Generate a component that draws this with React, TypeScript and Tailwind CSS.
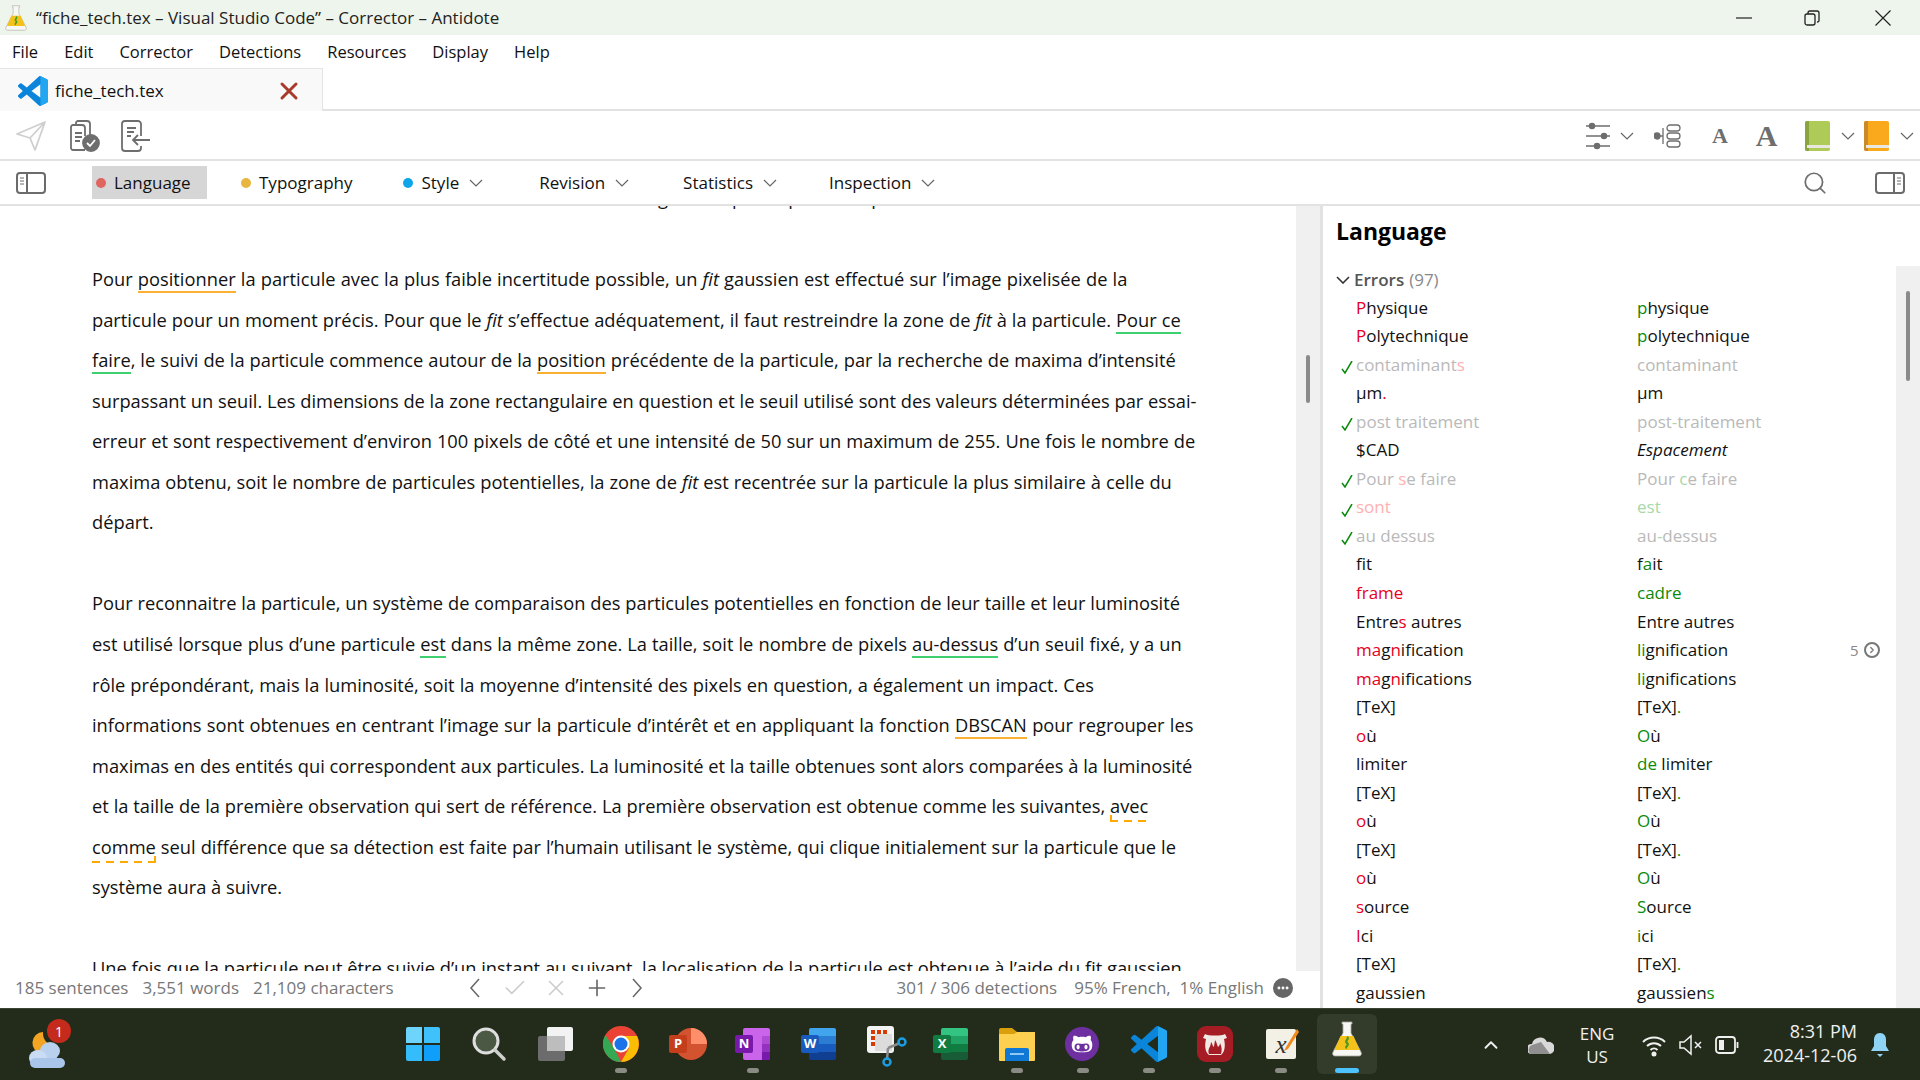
import React from "react";
import { ChevronRight, ChevronUp, Check, X, Plus, Search, Ellipsis } from "lucide-react";
import { FaGithubAlt } from "react-icons/fa";

const Flask = ({ size = 36 }: { size?: number }) => (
  <svg width={size} height={size} viewBox="0 0 36 36">
    <path d="M13 1h10v2h-1v9l10 19c1 2 0 4-2 4H6c-2 0-3-2-2-4l10-19V3h-1z" fill="#f7f7f3" stroke="#a8a89e" strokeWidth="0.8" />
    <path d="M11.500 15h13l6 14H5.500z" fill="#f3c21b" />
    <path d="M18 16c3 2-3 4 0 6s-3 4 0 5" stroke="#4a9a22" strokeWidth="2.200" fill="none" />
  </svg>
);

const VsCode = ({ size = 36 }: { size?: number }) => (
  <svg width={size} height={size} viewBox="0 0 24 24">
    <path
      fill="#0a85d9"
      d="M23.15 2.587L18.21.21a1.494 1.494 0 0 0-1.705.29l-9.46 8.63-4.12-3.128a.999.999 0 0 0-1.276.057L.327 7.261A1 1 0 0 0 .326 8.74L3.899 12 .326 15.26a1 1 0 0 0 .001 1.479L1.65 17.94a.999.999 0 0 0 1.276.057l4.12-3.128 9.46 8.63a1.492 1.492 0 0 0 1.704.29l4.942-2.377A1.5 1.5 0 0 0 24 20.06V3.939a1.5 1.5 0 0 0-.85-1.352zm-5.146 14.861L10.826 12l7.178-5.448v10.896z"
    />
    <path fill="#23a6f2" d="M18 0.2l5.150 2.387A1.5 1.5 0 0 1 24 3.939V20.060a1.500 1.500 0 0 1-.85 1.350L18 23.800z" />
  </svg>
);

const WinLogo = () => (
  <svg width="36" height="36" viewBox="0 0 36 36">
    <path d="M1 3a2 2 0 0 1 2-2h14v16H1z" fill="#6fd4fb" />
    <path d="M19 1h14a2 2 0 0 1 2 2v14H19z" fill="#3fc1fb" />
    <path d="M1 19h16v16H3a2 2 0 0 1-2-2z" fill="#35bcfb" />
    <path d="M19 19h16v14a2 2 0 0 1-2 2H19z" fill="#0f9ffa" />
  </svg>
);

const SearchBar = () => (
  <svg width="36" height="36" viewBox="0 0 36 36">
    <circle cx="15" cy="15" r="12" fill="#4b5843" stroke="#dedede" strokeWidth="3" />
    <path d="M24 24l9 9" stroke="#cfcfcf" strokeWidth="3.500" strokeLinecap="round" />
  </svg>
);

const TaskView = () => (
  <svg width="36" height="36" viewBox="0 0 36 36">
    <rect x="10" y="1" width="26" height="24" rx="2" fill="#f2f2f2" />
    <rect x="1" y="10" width="27" height="25" rx="2" fill="#6c6c6c" />
    <rect x="10" y="10" width="18" height="15" fill="#bdbdbd" />
  </svg>
);

const Chrome = () => (
  <svg width="36" height="36" viewBox="0 0 36 36">
    <circle cx="18" cy="18" r="18" fill="#ea4335" />
    <path d="M2.400 9L11 22l7 14A18 18 0 0 1 2.400 9z" fill="#34a853" />
    <path d="M18 36l8-14-8-12h16a18 18 0 0 1-16 26z" fill="#fbbc04" />
    <circle cx="18" cy="18" r="8.500" fill="#fff" />
    <circle cx="18" cy="18" r="6.500" fill="#1a73e8" />
  </svg>
);

const OfficeTile = ({ letter, bg }: { letter: string; bg: string }) => (
  <div className={`w-[18px] h-[18px] rounded-[2px] flex items-center justify-center text-[13px] font-bold text-white ${bg}`}>
    {letter}
  </div>
);

const PowerPoint = () => (
  <div className="relative w-[36px] h-[36px]">
    <div className="absolute left-[6px] top-[2px] w-[32px] h-[32px] rounded-full bg-[#d35230]" />
    <div className="absolute left-[22px] top-[2px] w-[16px] h-[16px] rounded-tr-full bg-[#ff8f6b]" />
    <div className="absolute left-0 top-[9px]">
      <OfficeTile letter="P" bg="bg-[#c43e1c]" />
    </div>
  </div>
);

const OneNote = () => (
  <div className="relative w-[36px] h-[36px]">
    <div className="absolute left-[8px] top-[2px] w-[27px] h-[32px] rounded-[2px] bg-[#ca64ea]" />
    <div className="absolute left-[27px] top-[10px] w-[8px] h-[8px] bg-[#ae4bd5]" />
    <div className="absolute left-[27px] top-[18px] w-[8px] h-[8px] bg-[#9332bf]" />
    <div className="absolute left-[27px] top-[26px] w-[8px] h-[8px] bg-[#7719aa]" />
    <div className="absolute left-0 top-[9px]">
      <OfficeTile letter="N" bg="bg-[#7719aa]" />
    </div>
  </div>
);

const Word = () => (
  <div className="relative w-[36px] h-[36px]">
    <div className="absolute left-[8px] top-[2px] w-[27px] h-[8px] rounded-t-[2px] bg-[#41a5ee]" />
    <div className="absolute left-[8px] top-[10px] w-[27px] h-[8px] bg-[#2b7cd3]" />
    <div className="absolute left-[8px] top-[18px] w-[27px] h-[8px] bg-[#185abd]" />
    <div className="absolute left-[8px] top-[26px] w-[27px] h-[8px] rounded-b-[2px] bg-[#103f91]" />
    <div className="absolute left-0 top-[9px]">
      <OfficeTile letter="W" bg="bg-[#185abd]" />
    </div>
  </div>
);

const Excel = () => (
  <div className="relative w-[36px] h-[36px]">
    <div className="absolute left-[8px] top-[2px] w-[27px] h-[8px] rounded-t-[2px] bg-[#33c481]" />
    <div className="absolute left-[8px] top-[10px] w-[27px] h-[8px] bg-[#21a366]" />
    <div className="absolute left-[8px] top-[18px] w-[27px] h-[8px] bg-[#107c41]" />
    <div className="absolute left-[8px] top-[26px] w-[27px] h-[8px] rounded-b-[2px] bg-[#185c37]" />
    <div className="absolute left-0 top-[9px]">
      <OfficeTile letter="X" bg="bg-[#107c41]" />
    </div>
  </div>
);

const Snip = () => (
  <svg width="36" height="36" viewBox="0 0 36 36" className="overflow-visible">
    <rect x="0" y="0" width="27" height="27" rx="3" fill="#f3f3f3" />
    <path d="M4 4h4v4H4zM10 4h4v4h-4zM16 4h4v4h-4zM4 10h4v4H4zM4 16h4v4H4z" fill="#d83b01" />
    <rect x="8" y="8" width="17" height="17" fill="#dcdcdc" />
    <path d="M21 22l12-5M21 22l-1 12" stroke="#8a8a8a" strokeWidth="2.500" />
    <circle cx="35" cy="16" r="3.500" fill="none" stroke="#1b9de2" strokeWidth="2.500" />
    <circle cx="20" cy="36" r="3.500" fill="none" stroke="#1b9de2" strokeWidth="2.500" />
  </svg>
);

const Explorer = () => (
  <svg width="36" height="36" viewBox="0 0 36 36">
    <path d="M0 4a2 2 0 0 1 2-2h11l5 4h18v6H0z" fill="#d9a00b" />
    <path d="M0 8h15l3-2h18v28a1 1 0 0 1-1 1H1a1 1 0 0 1-1-1z" fill="#fdd04f" />
    <path d="M6 24a2 2 0 0 1 2-2h20a2 2 0 0 1 2 2v11H6z" fill="#0f78d4" />
    <rect x="11" y="27" width="14" height="2" fill="#8fc9f2" />
  </svg>
);

const GitHubDesk = () => (
  <div className="w-[34px] h-[34px] mt-[1px] rounded-full bg-[#6e2fa0] flex items-center justify-center text-white">
    <FaGithubAlt size={22} />
  </div>
);

const TexLive = () => (
  <svg width="36" height="36" viewBox="0 0 36 36">
    <rect x="0" y="0" width="36" height="36" rx="9" fill="#a51c25" />
    <path d="M8 8c3 2 17 2 20 0l2 4-3 1c2 8 0 14-3 16H12c-3-2-5-8-3-16l-3-1z" fill="#f3e9e4" />
    <path d="M12 28c-2-5 2-7 2-12 2 2 1 4 3 5 0-3 1-5 1-7 2 3 2 5 3 7 1-1 2-2 2-4 2 4 2 8 1 11z" fill="#a51c25" />
  </svg>
);

const Xournal = () => (
  <div className="relative w-[36px] h-[36px]">
    <div className="absolute left-[3px] top-[3px] w-[30px] h-[30px] rounded-[2px] bg-[#f3f0e6] flex items-center justify-center">
      <span className="font-['Liberation_Serif',serif] italic text-[25px] leading-none text-[#333]">x</span>
    </div>
    <svg width="36" height="36" viewBox="0 0 36 36" className="absolute left-0 top-0">
      <path d="M34 3L23 21l-2 4 4-2L36 6z" fill="#f08a1d" />
    </svg>
  </div>
);

const Weather = () => (
  <svg width="40" height="40" viewBox="0 0 40 40">
    <path d="M15 2a11 11 0 1 0 11 14A13 13 0 0 1 15 2z" fill="#f3a422" />
    <ellipse cx="22" cy="21" rx="10" ry="9" fill="#b9d1ee" />
    <ellipse cx="10" cy="28" rx="9" ry="8" fill="#c9dcf3" />
    <rect x="2" y="28" width="35" height="10" rx="5" fill="#a9c5ea" />
  </svg>
);

const Book = ({ face, spine }: { face: string; spine: string }) => (
  <div className={`relative w-[25px] h-[30px] rounded-[2px] ${face}`}>
    <div className={`absolute left-0 top-0 h-full w-[4px] rounded-l-[2px] ${spine}`} />
    <div className="absolute left-[2px] right-0 bottom-[3px] h-[3px] bg-[#e8e8e0]" />
  </div>
);

const PanelIcon = ({ side }: { side: "left" | "right" }) => (
  <svg width="30" height="22" viewBox="0 0 30 22" fill="none" stroke="#6b6b6b" strokeWidth="2">
    <rect x="1" y="1" width="28" height="20" rx="3" />
    {side === "left" ? (
      <>
        <path d="M11 1v20" />
        <path d="M4 6h4M4 9h4M4 12h4" strokeWidth="1" />
      </>
    ) : (
      <>
        <path d="M19 1v20" />
        <path d="M22 6h4M22 9h4M22 12h4" strokeWidth="1" />
      </>
    )}
  </svg>
);

// thin chevrons, lucide's are too small once their box fits the row
const Chev = ({ className = "" }: { className?: string }) => (
  <svg width="14" height="8" viewBox="0 0 14 8" fill="none" stroke="#666" strokeWidth="1.200" className={className}>
    <path d="M1 1l6 6 6-6" />
  </svg>
);

const StatusArrow = ({ dir }: { dir: "left" | "right" }) => (
  <svg width="24" height="20" viewBox="0 0 24 20" fill="none" stroke="#666" strokeWidth="1.500">
    <path d={dir === "left" ? "M16 1l-8 9 8 9" : "M8 1l8 9-8 9"} />
  </svg>
);

const taskIcons: { icon: React.ReactNode; dot?: boolean }[] = [
  { icon: <WinLogo /> },
  { icon: <SearchBar /> },
  { icon: <TaskView /> },
  { icon: <Chrome />, dot: true },
  { icon: <PowerPoint /> },
  { icon: <OneNote />, dot: true },
  { icon: <Word /> },
  { icon: <Snip /> },
  { icon: <Excel /> },
  { icon: <Explorer />, dot: true },
  { icon: <GitHubDesk />, dot: true },
  { icon: <VsCode />, dot: true },
  { icon: <TexLive />, dot: true },
  { icon: <Xournal />, dot: true },
];

const O = ({ children }: { children: React.ReactNode }) => (
  <span className="border-b-2 border-[#fbb034]">{children}</span>
);
const Gn = ({ children }: { children: React.ReactNode }) => (
  <span className="border-b-2 border-[#3ecf6e]">{children}</span>
);
const D = ({ children, tick }: { children: React.ReactNode; tick: "start" | "end" }) => (
  <span className="relative pb-[4px] bg-[repeating-linear-gradient(90deg,#ffaa00_0_8px,transparent_8px_14px)] bg-bottom bg-no-repeat bg-[length:100%_2px]">
    {children}
    <span
      className={`absolute bottom-0 w-[2px] h-[7px] bg-[#ffaa00] ${tick === "start" ? "left-0" : "right-0"}`}
    />
  </span>
);
const I = ({ children }: { children: React.ReactNode }) => <em className="italic">{children}</em>;

const Line = ({ children, className = "" }: { children?: React.ReactNode; className?: string }) => (
  <div className={`h-[40.550px] whitespace-nowrap ${className}`}>{children}</div>
);

const r = (s: string) => <span className="text-[#e60023]">{s}</span>;
const g = (s: string) => <span className="text-[#0a8a0a]">{s}</span>;
const fr = (s: string) => <span className="text-[#ffb0b0]">{s}</span>;
const fg = (s: string) => <span className="text-[#a8d8a8]">{s}</span>;

const rows: { a: React.ReactNode; b: React.ReactNode; done?: boolean; count?: number }[] = [
  { a: <>{r("P")}hysique</>, b: <>{g("p")}hysique</> },
  { a: <>{r("P")}olytechnique</>, b: <>{g("p")}olytechnique</> },
  { a: <>contaminant{fr("s")}</>, b: "contaminant", done: true },
  { a: <>µm{r(".")}</>, b: "µm" },
  { a: "post traitement", b: <>post{fg("-")}traitement</>, done: true },
  { a: "$CAD", b: <em className="italic">Espacement</em> },
  { a: <>Pour {fr("s")}e faire</>, b: <>Pour {fg("c")}e faire</>, done: true },
  { a: fr("sont"), b: fg("est"), done: true },
  { a: "au dessus", b: <>au{fg("-")}dessus</>, done: true },
  { a: "fit", b: <>f{g("a")}it</> },
  { a: r("frame"), b: g("cadre") },
  { a: <>Entre{r("s")} autres</>, b: "Entre autres" },
  { a: <>{r("ma")}g{r("n")}ification</>, b: <>{g("li")}gnification</>, count: 5 },
  { a: <>{r("ma")}g{r("n")}ifications</>, b: <>{g("li")}gnifications</> },
  { a: "[TeX]", b: <>[TeX]{g(".")}</> },
  { a: <>{r("o")}ù</>, b: <>{g("O")}ù</> },
  { a: "limiter", b: <>{g("de")} limiter</> },
  { a: "[TeX]", b: <>[TeX]{g(".")}</> },
  { a: <>{r("o")}ù</>, b: <>{g("O")}ù</> },
  { a: "[TeX]", b: <>[TeX]{g(".")}</> },
  { a: <>{r("o")}ù</>, b: <>{g("O")}ù</> },
  { a: <>{r("s")}ource</>, b: <>{g("S")}ource</> },
  { a: <>{r("I")}ci</>, b: <>{g("i")}ci</> },
  { a: "[TeX]", b: <>[TeX]{g(".")}</> },
  { a: "gaussien", b: <>gaussien{g("s")}</> },
];

const Tab = ({ label, dot, chevron, ml }: { label: string; dot?: string; chevron?: boolean; ml: string }) => (
  <div className={`flex items-center ${ml}`}>
    {dot && <span className={`w-[10px] h-[10px] rounded-full mr-[8px] ${dot}`} />}
    <span>{label}</span>
    {chevron && <Chev className="ml-[10px] mr-[1px]" />}
  </div>
);

export default function App() {
  return (
    <div className="w-[1920px] h-[1080px] flex flex-col overflow-hidden bg-white text-[#111] font-['Open_Sans',sans-serif] text-[17px]">
      {/* title bar */}
      <div className="h-[35px] shrink-0 flex items-center bg-[#eef5ec] pl-[3px]">
        <Flask size={26} />
        <span className="ml-[7px] text-[#222]">“fiche_tech.tex – Visual Studio Code” – Corrector – Antidote</span>
        <div className="ml-auto flex items-center pr-[29px]">
          <svg width="16" height="16" viewBox="0 0 16 16" stroke="#222" strokeWidth="1.200">
            <path d="M0 8h16" />
          </svg>
          <svg width="16" height="16" viewBox="0 0 16 16" fill="none" stroke="#222" strokeWidth="1.300" className="ml-[52px]">
            <rect x="1" y="4" width="10" height="11" rx="2" />
            <path d="M4 4V3a2 2 0 0 1 2-2h7a2 2 0 0 1 2 2v8a2 2 0 0 1-2 1" />
          </svg>
          <svg width="16" height="16" viewBox="0 0 16 16" stroke="#222" strokeWidth="1.200" className="ml-[55px]">
            <path d="M0.500 0.500l15 15M15.500 0.500l-15 15" />
          </svg>
        </div>
      </div>

      {/* menu */}
      <div className="h-[33px] shrink-0 flex items-center pl-[12px] pt-[1px] gap-[26px] text-[#111] text-[16.500px]">
        <span>File</span>
        <span>Edit</span>
        <span>Corrector</span>
        <span>Detections</span>
        <span>Resources</span>
        <span>Display</span>
        <span>Help</span>
      </div>

      {/* doc tab */}
      <div className="h-[43px] shrink-0 flex">
        <div className="w-[323px] flex items-center bg-[#f9f9f9] border-t border-r border-[#e4e4e4] pl-[18px] pr-[19px] pt-[2px]">
          <VsCode size={30} />
          <span className="ml-[7px]">fiche_tech.tex</span>
          <X size={28} strokeWidth={2.600} className="ml-auto text-[#a83a2c]" />
        </div>
        <div className="flex-1 border-b-2 border-[#e2e2e2]" />
      </div>

      {/* toolbar */}
      <div className="h-[50px] shrink-0 flex items-center border-b-2 border-[#e2e2e2] pl-[16px] pr-[6px] pt-[1px]">
        <svg width="30" height="30" viewBox="0 0 30 30" fill="none" stroke="#cfcfcf" strokeWidth="1.800" strokeLinejoin="round">
          <path d="M1 13L29 1 19 29l-5-12zM14 17L29 1" />
        </svg>
        <svg width="30" height="32" viewBox="0 0 30 32" fill="none" stroke="#6e6e6e" strokeWidth="1.800" className="ml-[24px]">
          <path d="M6 4V3a2 2 0 0 1 2-2h9a3 3 0 0 1 3 3v12" />
          <path d="M15 30H3a2 2 0 0 1-2-2V7a2 2 0 0 1 2-2h9a3 3 0 0 1 3 3v8" />
          <path d="M5 13h7M5 17h7M5 21h5" />
          <circle cx="21" cy="23" r="8" fill="#6e6e6e" />
          <path d="M17 23l3 3 5-6" stroke="#fff" />
        </svg>
        <svg width="30" height="32" viewBox="0 0 30 32" fill="none" stroke="#6e6e6e" strokeWidth="1.800" className="ml-[21px]">
          <path d="M20 16V4a3 3 0 0 0-3-3H4a3 3 0 0 0-3 3v24a3 3 0 0 0 3 3h13a3 3 0 0 0 3-3v-2" />
          <path d="M6 8h9M6 12h7M6 16h4" />
          <path d="M29 20H12M17 15l-5 5 5 5" />
        </svg>
        <div className="ml-auto flex items-center text-[#6e6e6e]">
          <svg width="24" height="28" viewBox="0 0 24 28" fill="#6e6e6e" stroke="#6e6e6e" strokeWidth="1.500">
            <path d="M0 4h24M0 14h24M0 24h24" />
            <circle cx="6" cy="4" r="2.500" />
            <circle cx="18" cy="14" r="2.500" />
            <circle cx="11" cy="24" r="2.500" />
          </svg>
          <Chev className="ml-[10px]" />
          <svg width="27" height="24" viewBox="0 0 27 24" fill="none" stroke="#6e6e6e" strokeWidth="1.300" className="ml-[20px]">
            <circle cx="3" cy="12" r="3" fill="#6e6e6e" />
            <path d="M3 12h6M9 4v16" />
            <rect x="13" y="1" width="13" height="6" rx="3" />
            <rect x="13" y="9" width="13" height="6" rx="3" />
            <rect x="13" y="17" width="13" height="6" rx="3" />
          </svg>
          <span className="ml-[30px] w-[18px] text-center font-['Liberation_Serif',serif] font-bold text-[22px] leading-none">A</span>
          <span className="ml-[26px] w-[23px] text-center font-['Liberation_Serif',serif] font-bold text-[30px] leading-none">A</span>
          <div className="ml-[27px]">
            <Book face="bg-[#aecb57]" spine="bg-[#8aa53f]" />
          </div>
          <Chev className="ml-[11px]" />
          <div className="ml-[9px]">
            <Book face="bg-[#fba91c]" spine="bg-[#c98a2a]" />
          </div>
          <Chev className="ml-[11px]" />
        </div>
      </div>

      {/* category tabs */}
      <div className="h-[45px] shrink-0 flex items-center border-b-2 border-[#e2e2e2] pl-[16px]">
        <PanelIcon side="left" />
        <div className="ml-[46px] h-[33px] w-[115px] bg-[#d6d6d6] flex items-center pl-[4px]">
          <Tab label="Language" dot="bg-[#e0645f]" ml="ml-0" />
        </div>
        <Tab label="Typography" dot="bg-[#e8b53e]" ml="ml-[34px]" />
        <Tab label="Style" dot="bg-[#0ea5e9]" chevron ml="ml-[51px]" />
        <Tab label="Revision" chevron ml="ml-[55px]" />
        <Tab label="Statistics" chevron ml="ml-[53px]" />
        <Tab label="Inspection" chevron ml="ml-[51px]" />
        <Search size={26} strokeWidth={1.6} className="ml-auto text-[#6e6e6e]" />
        <div className="ml-[47px] mr-[15px]">
          <PanelIcon side="right" />
        </div>
      </div>

      {/* main */}
      <div className="flex-1 min-h-0 flex">
        <div className="w-[1320px] shrink-0 flex flex-col">
          <div className="flex-1 min-h-0 flex">
            <div className="w-[1296px] overflow-hidden pl-[92px] text-[18.300px] leading-[40.550px] text-[#111]">
              <div className="-mt-[28px]">
                <Line>
                  <span className="inline-block w-[566px]" />
                  g<span className="inline-block w-[64px]" />p<span className="inline-block w-[45px]" />p
                  <span className="inline-block w-[72px]" />p
                </Line>
                <Line />
                <Line className="[word-spacing:0.4px]">
                  Pour <O>positionner</O> la particule avec la plus faible incertitude possible, un <I>fit</I> gaussien est effectué sur l’image pixelisée de la
                </Line>
                <Line className="[word-spacing:0.2px]">
                  particule pour un moment précis. Pour que le <I>fit</I> s’effectue adéquatement, il faut restreindre la zone de <I>fit</I> à la particule. <Gn>Pour ce</Gn>
                </Line>
                <Line className="[word-spacing:0.2px]">
                  <Gn>faire</Gn>, le suivi de la particule commence autour de la <O>position</O> précédente de la particule, par la recherche de maxima d’intensité
                </Line>
                <Line>surpassant un seuil. Les dimensions de la zone rectangulaire en question et le seuil utilisé sont des valeurs déterminées par essai-</Line>
                <Line className="[word-spacing:0.3px]">erreur et sont respectivement d’environ 100 pixels de côté et une intensité de 50 sur un maximum de 255. Une fois le nombre de</Line>
                <Line className="[word-spacing:0.25px]">
                  maxima obtenu, soit le nombre de particules potentielles, la zone de <I>fit</I> est recentrée sur la particule la plus similaire à celle du
                </Line>
                <Line>départ.</Line>
                <Line />
                <Line className="[word-spacing:0.1px]">Pour reconnaitre la particule, un système de comparaison des particules potentielles en fonction de leur taille et leur luminosité</Line>
                <Line className="[word-spacing:0.3px]">
                  est utilisé lorsque plus d’une particule <Gn>est</Gn> dans la même zone. La taille, soit le nombre de pixels <Gn>au-dessus</Gn> d’un seuil fixé, y a un
                </Line>
                <Line className="[word-spacing:0.25px]">rôle prépondérant, mais la luminosité, soit la moyenne d’intensité des pixels en question, a également un impact. Ces</Line>
                <Line className="[word-spacing:0.5px]">
                  informations sont obtenues en centrant l’image sur la particule d’intérêt et en appliquant la fonction <O>DBSCAN</O> pour regrouper les
                </Line>
                <Line>maximas en des entités qui correspondent aux particules. La luminosité et la taille obtenues sont alors comparées à la luminosité</Line>
                <Line className="[word-spacing:0.1px]">
                  et la taille de la première observation qui sert de référence. La première observation est obtenue comme les suivantes, <D tick="start">avec</D>
                </Line>
                <Line className="[word-spacing:0.25px]">
                  <D tick="end">comme</D> seul différence que sa détection est faite par l’humain utilisant le système, qui clique initialement sur la particule que le
                </Line>
                <Line>système aura à suivre.</Line>
                <Line />
                <Line>Une fois que la particule peut être suivie d’un instant au suivant, la localisation de la particule est obtenue à l’aide du fit gaussien</Line>
              </div>
            </div>
            <div className="w-[24px] bg-[#f0f0f0] pt-[149px] pl-[10px]">
              <div className="w-[4px] h-[48px] rounded-full bg-[#8a8a8a]" />
            </div>
          </div>
          {/* status */}
          <div className="h-[37px] shrink-0 flex items-center pl-[15px] pr-[27px] pb-[4px] text-[#777] text-[17px]">
            <span>185 sentences</span>
            <span className="ml-[14px]">3,551 words</span>
            <span className="ml-[14px]">21,109 characters</span>
            <div className="ml-[69px] flex items-center gap-[15px]">
              <StatusArrow dir="left" />
              <Check size={26} strokeWidth={1.5} className="text-[#ccc]" />
              <X size={26} strokeWidth={1.5} className="text-[#ccc]" />
              <Plus size={26} strokeWidth={1.5} className="text-[#666]" />
              <StatusArrow dir="right" />
            </div>
            <span className="ml-auto">301 / 306 detections</span>
            <span className="ml-[17px]">95% French,&nbsp; 1% English</span>
            <span className="ml-[9px] w-[20px] h-[20px] rounded-full bg-[#666] text-white flex items-center justify-center">
              <Ellipsis size={14} strokeWidth={3} />
            </span>
          </div>
        </div>

        {/* sidebar */}
        <div className="flex-1 min-w-0 border-l-[3px] border-[#e2e2e2] flex overflow-hidden">
          <div className="w-[573px] shrink-0 flex flex-col">
            <div className="pl-[13px] pt-[5px] h-[61px] text-[23px] font-bold text-black leading-[40px]">Language</div>
            <div className="pl-[13px] h-[26px] flex items-center text-[#666]">
              <Chev className="mr-[3px] [&>path]:stroke-[#333] [&>path]:stroke-[1.6]" />
              <span className="ml-[1px] font-semibold text-[#555]">Errors</span>
              <span className="ml-[5px] text-[#888]">(97)</span>
            </div>
            {rows.map((row, i) => (
              <div
                key={i}
                className={`h-[28.550px] shrink-0 flex items-center ${row.done ? "text-[#b9b9b9]" : "text-[#111]"}`}
              >
                <div className="w-[33px] pl-[18px] pt-[6px]">
                  {row.done && (
                    <svg width="12" height="13" viewBox="0 0 12 13" fill="none" stroke="#0a8a0a" strokeWidth="1.500">
                      <path d="M1 8l3 4 7-12" />
                    </svg>
                  )}
                </div>
                <div className="w-[281px]">{row.a}</div>
                <div className="w-[213px]">{row.b}</div>
                {row.count && (
                  <div className="flex items-center gap-[5px] text-[#888] text-[15px]">
                    {row.count}
                    <span className="w-[16px] h-[16px] rounded-full border-2 border-[#777] flex items-center justify-center">
                      <ChevronRight size={10} strokeWidth={3} className="text-[#777]" />
                    </span>
                  </div>
                )}
              </div>
            ))}
          </div>
          <div className="flex-1 flex flex-col">
            <div className="h-[60px] shrink-0" />
            <div className="flex-1 bg-[#f0f0f0] pt-[25px] pl-[10px]">
              <div className="w-[4px] h-[90px] rounded-full bg-[#8a8a8a]" />
            </div>
          </div>
        </div>
      </div>

      {/* taskbar */}
      <div className="h-[72px] shrink-0 flex border-t border-[#3a4233] bg-[#232c1a] text-[#f0f0f0] text-[17px]">
        <div className="w-[390px] shrink-0 pl-[28px] pt-[21px] relative">
          <Weather />
          <span className="absolute left-[47px] top-[10px] w-[24px] h-[24px] rounded-full bg-[#c42b1c] text-white text-[14px] flex items-center justify-center">
            1
          </span>
        </div>
        {taskIcons.map((t, i) => (
          <div key={i} className="w-[66px] shrink-0 flex flex-col items-center pt-[17px]">
            <div className="h-[36px] w-[36px]">{t.icon}</div>
            {t.dot && <div className="mt-[6px] w-[12px] h-[5px] rounded-full bg-[#8b8b85]" />}
          </div>
        ))}
        <div className="w-[66px] shrink-0 flex justify-center pt-[5px]">
          <div className="w-[60px] h-[60px] rounded-[6px] bg-[#333b2b] flex flex-col items-center pt-[7px] relative">
            <Flask />
            <div className="absolute bottom-[1px] w-[24px] h-[5px] rounded-full bg-[#4cc2ff]" />
          </div>
        </div>
        <div className="flex items-center">
          <ChevronUp size={22} strokeWidth={2} className="ml-[100px]" />
          <svg width="26" height="20" viewBox="0 0 26 20" className="ml-[26px]">
            <path d="M3 19a5 5 0 0 1 1-10 8 8 0 0 1 15-2 6 6 0 0 1 3 12z" fill="#d8d8d8" />
            <path d="M3 19a5 5 0 0 1 1-9l9-3 9 12z" fill="#8f8f8f" />
          </svg>
          <div className="ml-[23px] w-[40px] text-center leading-[23px]">
            <div>ENG</div>
            <div>US</div>
          </div>
          <svg width="24" height="24" viewBox="0 0 24 24" fill="none" stroke="#f0f0f0" strokeWidth="2" className="ml-[25px]">
            <path d="M1 9a16 16 0 0 1 22 0M5 13a10 10 0 0 1 14 0M8.500 17a5 5 0 0 1 7 0" />
            <circle cx="12" cy="21" r="1.500" fill="#f0f0f0" />
          </svg>
          <svg width="24" height="22" viewBox="0 0 24 22" fill="none" stroke="#f0f0f0" strokeWidth="1.500" className="ml-[13px]">
            <path d="M1 8v6h4l7 6V2L5 8zM16 8l6 6M22 8l-6 6" />
          </svg>
          <svg width="24" height="20" viewBox="0 0 24 20" fill="none" stroke="#f0f0f0" strokeWidth="1.800" className="ml-[12px]">
            <rect x="1" y="2" width="19" height="16" rx="3" />
            <rect x="4" y="5" width="5" height="10" fill="#f0f0f0" stroke="none" />
            <path d="M22.500 7v6" />
          </svg>
          <div className="ml-[18px] -mt-[3px] w-[100px] text-right leading-[24px] text-[18px]">
            <div>8:31 PM</div>
            <div>2024-12-06</div>
          </div>
          <svg width="20" height="26" viewBox="0 0 20 26" className="ml-[13px]">
            <path d="M10 1c4 0 6 3 6 7v6l3 5H1l3-5V8c0-4 2-7 6-7z" fill="#8fd3f7" />
            <path d="M7 22h6l-3 3z" fill="#8fd3f7" />
          </svg>
        </div>
      </div>
    </div>
  );
}
